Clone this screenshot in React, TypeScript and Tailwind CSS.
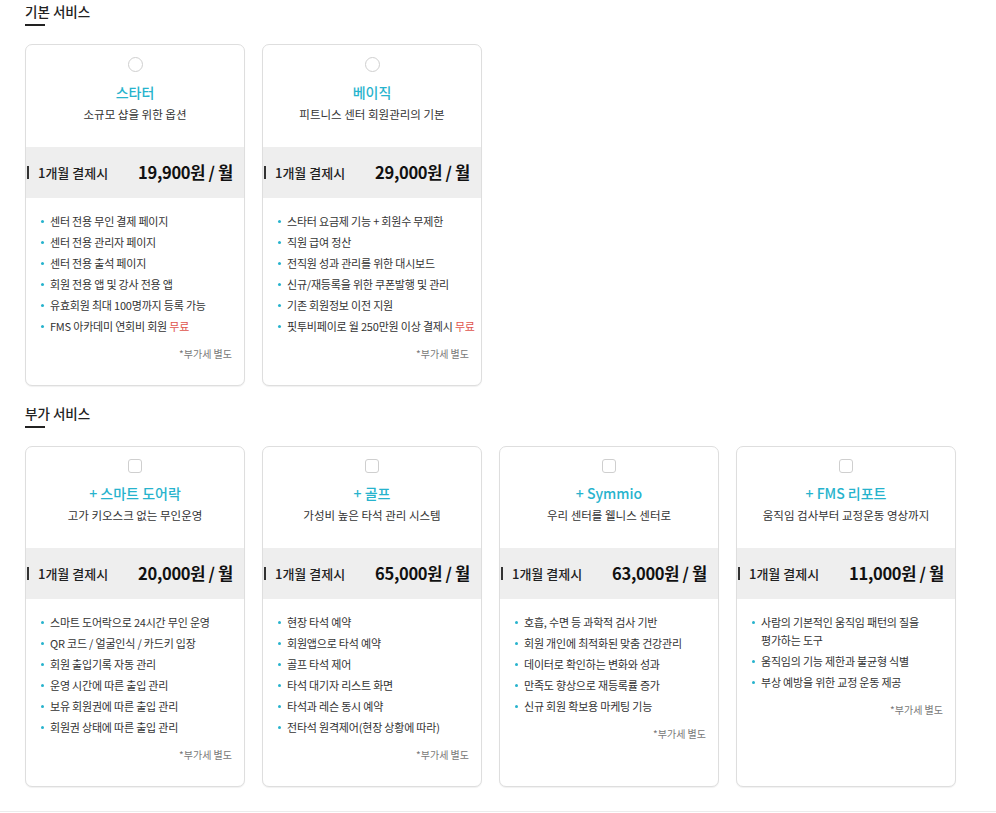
import React from 'react';

type Plan = {
  title: string;
  desc: string;
  price: string;
  features: React.ReactNode[];
};

const Free = () => <span className="text-[#e0544c]">무료</span>;

const basicPlans: Plan[] = [
  {
    title: '스타터',
    desc: '소규모 샵을 위한 옵션',
    price: '19,900원 / 월',
    features: [
      '센터 전용 무인 결제 페이지',
      '센터 전용 관리자 페이지',
      '센터 전용 출석 페이지',
      '회원 전용 앱 및 강사 전용 앱',
      '유효회원 최대 100명까지 등록 가능',
      <>FMS 아카데미 연회비 회원 <Free /></>,
    ],
  },
  {
    title: '베이직',
    desc: '피트니스 센터 회원관리의 기본',
    price: '29,000원 / 월',
    features: [
      '스타터 요금제 기능 + 회원수 무제한',
      '직원 급여 정산',
      '전직원 성과 관리를 위한 대시보드',
      '신규/재등록을 위한 쿠폰발행 및 관리',
      '기존 회원정보 이전 지원',
      <>핏투비페이로 월 250만원 이상 결제시 <Free /></>,
    ],
  },
];

const addonPlans: Plan[] = [
  {
    title: '+ 스마트 도어락',
    desc: '고가 키오스크 없는 무인운영',
    price: '20,000원 / 월',
    features: [
      '스마트 도어락으로 24시간 무인 운영',
      'QR 코드 / 얼굴인식 / 카드키 입장',
      '회원 출입기록 자동 관리',
      '운영 시간에 따른 출입 관리',
      '보유 회원권에 따른 출입 관리',
      '회원권 상태에 따른 출입 관리',
    ],
  },
  {
    title: '+ 골프',
    desc: '가성비 높은 타석 관리 시스템',
    price: '65,000원 / 월',
    features: [
      '현장 타석 예약',
      '회원앱으로 타석 예약',
      '골프 타석 제어',
      '타석 대기자 리스트 화면',
      '타석과 레슨 동시 예약',
      '전타석 원격제어(현장 상황에 따라)',
    ],
  },
  {
    title: '+ Symmio',
    desc: '우리 센터를 웰니스 센터로',
    price: '63,000원 / 월',
    features: [
      '호흡, 수면 등 과학적 검사 기반',
      '회원 개인에 최적화된 맞춤 건강관리',
      '데이터로 확인하는 변화와 성과',
      '만족도 향상으로 재등록률 증가',
      '신규 회원 확보용 마케팅 기능',
    ],
  },
  {
    title: '+ FMS 리포트',
    desc: '움직임 검사부터 교정운동 영상까지',
    price: '11,000원 / 월',
    features: [
      <>사람의 기본적인 움직임 패턴의 질을<br />평가하는 도구</>,
      '움직임의 기능 제한과 불균형 식별',
      '부상 예방을 위한 교정 운동 제공',
    ],
  },
];

const PlanCard = ({ plan, kind }: { plan: Plan; kind: 'radio' | 'check' }) => (
  <div className="flex flex-col rounded-[7px] border border-[#dedede] bg-white shadow-[0_1px_1px_rgba(0,0,0,0.06)] overflow-hidden">
    <div className="flex flex-col items-center pt-[12px] pb-[24px]">
      <span
        className={
          kind === 'radio'
            ? 'h-[15px] w-[15px] rounded-full border border-[#cfcfcf]'
            : 'h-[14px] w-[14px] rounded-[3px] border border-[#cfcfcf]'
        }
      />
      <h3 className="mt-[10px] text-[14px] leading-[20px] font-medium text-[#27b3cd]">{plan.title}</h3>
      <p className="mt-[3px] text-[11.5px] leading-[18px] text-[#333]">{plan.desc}</p>
    </div>

    <div className="flex h-[51px] items-center justify-between bg-[#eeeeee] pr-[11px]">
      <div className="flex items-center">
        <span className="ml-[1px] h-[13px] w-[2px] bg-[#333]" />
        <span className="ml-[9px] text-[13px] font-medium text-[#222]">1개월 결제시</span>
      </div>
      <span className="text-[16.5px] font-bold tracking-[-0.3px] text-[#111]">{plan.price}</span>
    </div>

    <ul className="flex flex-col gap-[3px] px-[15px] pt-[14px]">
      {plan.features.map((f, i) => (
        <li key={i} className="flex text-[11px] leading-[18px] tracking-[-0.2px] text-[#333]">
          <span className="mt-[8px] mr-[6px] h-[3px] w-[3px] shrink-0 rounded-full bg-[#27b3cd]" />
          <span className="whitespace-nowrap">{f}</span>
        </li>
      ))}
    </ul>
    <p className="mt-[10px] pr-[12px] pb-[22px] text-right text-[10px] leading-[18px] text-[#777]">*부가세 별도</p>
  </div>
);

const Section = ({ title, children }: { title: string; children: React.ReactNode }) => (
  <section>
    <h2 className="pt-[1px] text-[13.5px] leading-[20px] font-medium text-[#222]">{title}</h2>
    <div className="mt-[3px] h-[2px] w-[20px] bg-[#222]" />
    <div className="mt-[18px] grid grid-cols-[repeat(4,220px)] gap-x-[17px]">{children}</div>
  </section>
);

export default function App() {
  return (
    <div
      className="min-h-[813px] bg-white"
      style={{ fontFamily: '"Noto Sans CJK KR", "Noto Sans", sans-serif' }}
    >
      <div className="flex flex-col gap-[16px] px-[25px]">
        <Section title="기본 서비스">
          {basicPlans.map((p) => (
            <PlanCard key={p.title} plan={p} kind="radio" />
          ))}
        </Section>
        <Section title="부가 서비스">
          {addonPlans.map((p) => (
            <PlanCard key={p.title} plan={p} kind="check" />
          ))}
        </Section>
      </div>
      <div className="mt-[24px] border-b border-[#ececec]" />
    </div>
  );
}
